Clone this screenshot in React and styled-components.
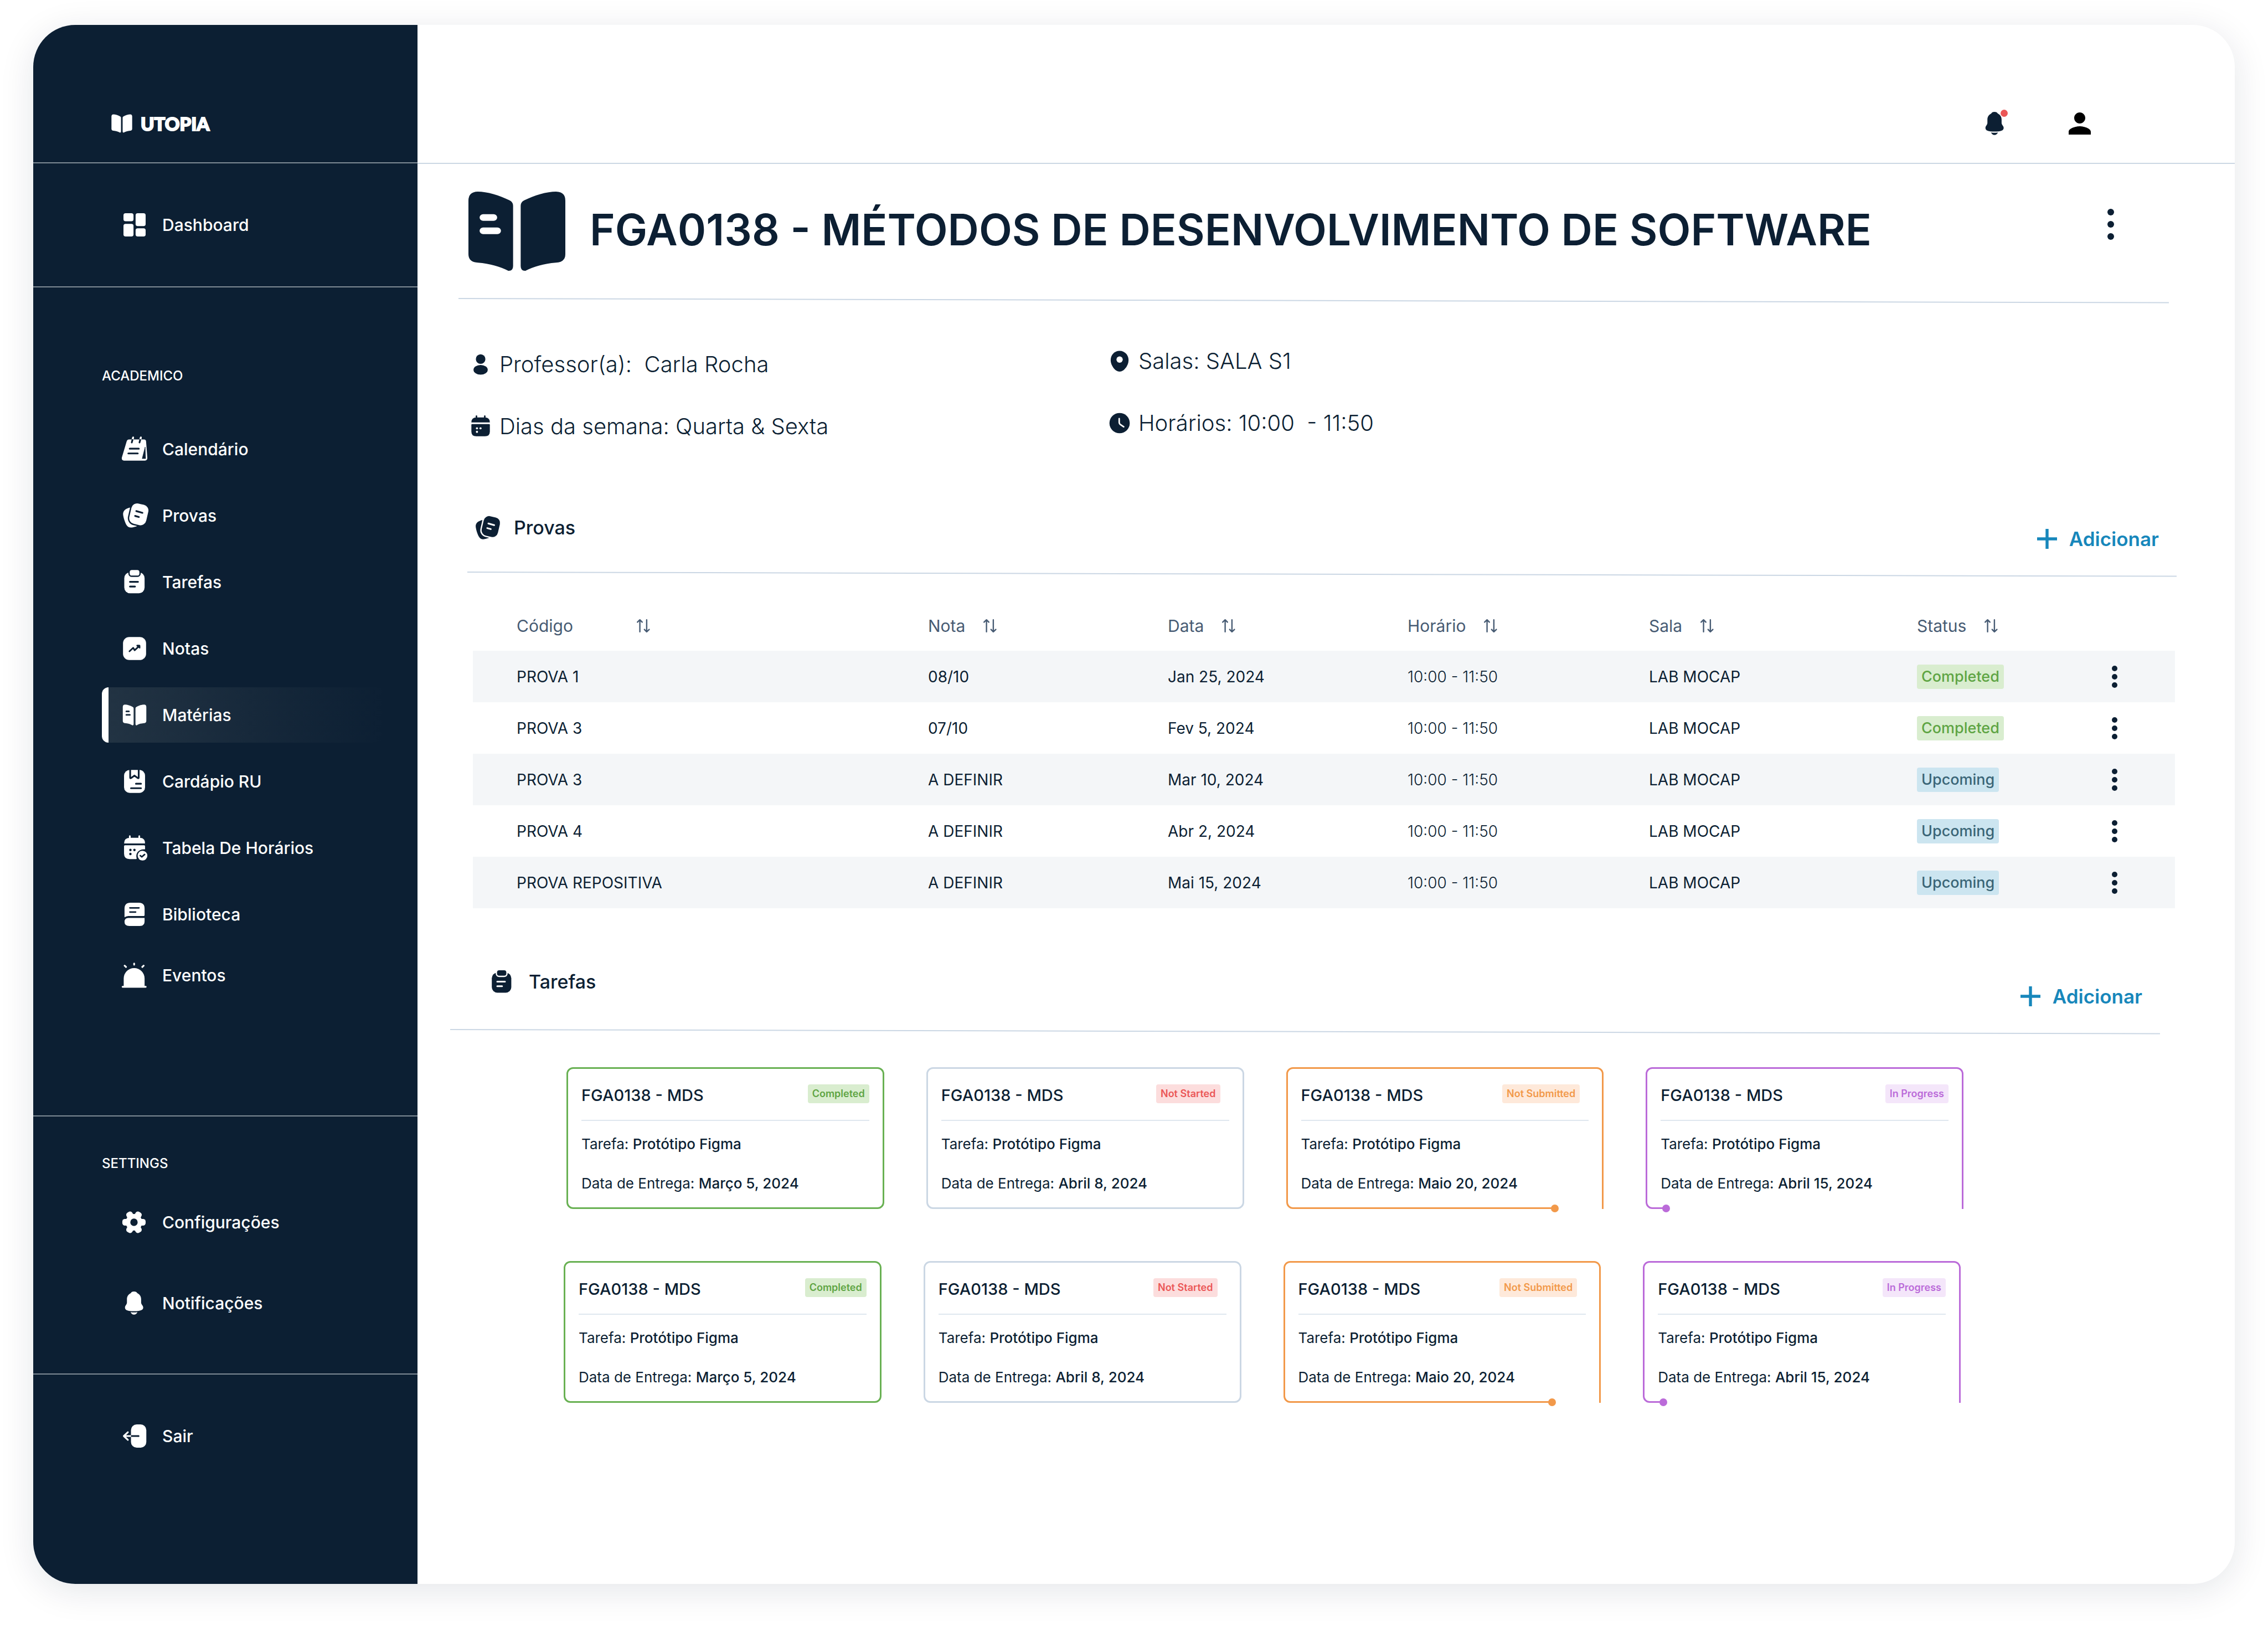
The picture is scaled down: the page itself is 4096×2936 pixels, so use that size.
import React from "react";
import styled, { createGlobalStyle, css } from "styled-components";

const navy = "#0c1f33";
const line = "#cbd7e4";

const GlobalStyle = createGlobalStyle`
  *, *::before, *::after { box-sizing: border-box; }
  body {
    margin: 0;
    background: #fff;
    color: ${navy};
    font-family: Inter, "Open Sans", sans-serif;
  }
  h1, h2, h3, p, ul, dl, dd { margin: 0; padding: 0; }
  ul { list-style: none; }
`;

/* ---------- icons ---------- */

const Svg = styled.svg`
  display: block;
  flex: none;
  width: ${(p) => p.$w || p.$size || 50}px;
  height: ${(p) => p.$h || p.$size || 50}px;
  fill: currentColor;
  overflow: visible;
`;

const Cut = ({ d, w = 1.5 }) => (
  <path d={d} fill="none" stroke="var(--cut)" strokeWidth={w} strokeLinecap="round" strokeLinejoin="round" />
);

const Icon = ({ size, w, h, box = "0 0 24 24", stretch, children }) => (
  <Svg $size={size} $w={w} $h={h} viewBox={box} preserveAspectRatio={stretch ? "none" : undefined} aria-hidden="true">
    {children}
  </Svg>
);

const DashboardIcon = (p) => (
  <Icon {...p}>
    <rect x="2.4" y="1.9" width="8.7" height="7" rx="1.8" />
    <rect x="2.4" y="11.1" width="8.7" height="11" rx="1.8" />
    <rect x="12.9" y="1.9" width="8.7" height="11.2" rx="1.8" />
    <rect x="12.9" y="15" width="8.7" height="7.1" rx="1.8" />
  </Icon>
);

const CalendarIcon = (p) => (
  <Icon {...p}>
    <path d="M7.2 3.6H20.2Q21.9 3.6 22 5.4L23.1 19.6Q23.1 21.9 21 21.9H2.8Q.5 21.7 1 19.2L5.2 5.2Q5.8 3.6 7.2 3.6Z" />
    <path d="M21.2 10.1L21.6 20.2H18.6Z" fill="var(--cut)" stroke="var(--cut)" strokeWidth=".3" />
    <path d="M10.8 1.8L10.3 3.6M17.5 1.8L17 3.6" stroke="currentColor" strokeWidth="1.5" strokeLinecap="round" />
    <path d="M10.3 3.6L9.6 6.2M17 3.6L16.3 6.2" stroke="var(--cut)" strokeWidth="1.5" strokeLinecap="round" />
    <path d="M10.8 1.8L10.35 3.4M17.5 1.8L17.05 3.4" stroke="currentColor" strokeWidth="1.5" />
    <Cut d="M7.8 11.6H15.7M6.6 15.7H14.8" />
  </Icon>
);

const ExamsIcon = (p) => (
  <Icon {...p}>
    <path d="M8.2 5C5 5.6 1.6 7.4 2.1 11.4C2.6 14.8 4 18.6 5.2 20.4C6.8 23 9.4 22.6 13.7 21.3Q14.6 20.8 13.6 20.4L12 12L8.6 5.6Q8.8 4.9 8.2 5Z" />
    <rect
      x="8.2" y="1.9" width="15" height="18" rx="5"
      transform="rotate(13 15.7 10.9)"
      stroke="var(--cut)" strokeWidth="2.4" paintOrder="stroke"
    />
    <Cut d="M13.5 8.1L18.8 9.6M12.5 12.3L15.7 13.2" />
  </Icon>
);

const TasksIcon = (p) => (
  <Icon {...p}>
    <rect x="3.1" y="3.6" width="17.6" height="18.1" rx="5" />
    <rect x="7.8" y="1.5" width="8.4" height="4.9" rx="1.9" stroke="var(--cut)" strokeWidth="2.4" paintOrder="stroke" />
    <Cut d="M8 11.8H15M8 15.9H12.4" />
  </Icon>
);

const GradesIcon = (p) => (
  <Icon {...p}>
    <rect x="2" y="2" width="20" height="20" rx="5.4" />
    <Cut d="M7.6 14.4L10.8 11.4L12.1 13.5L15.8 10.1" w={1.4} />
    <path d="M13.6 9.6Q13.5 8.8 14.3 8.8H16.2Q17 8.8 17 9.6V11.5Q16.8 12.3 16.2 11.9L13.9 10.1Z" fill="var(--cut)" />
  </Icon>
);

const BookIcon = ({ lines = true, ...p }) => (
  <Icon {...p}>
    <path d="M3.76 3.05C5.7 3.05 8.4 3.9 10.4 5Q11.2 5.4 11.2 6.2V19.9Q11.2 21 10.2 20.95C8.5 20 6.3 19.3 3.8 19.1Q1.8 19 1.8 17.2V5.1Q1.8 3.1 3.76 3.05Z" />
    <path d="M20.24 3.05C18.3 3.05 15.6 3.9 13.6 5Q12.8 5.4 12.8 6.2V19.9Q12.8 21 13.8 20.95C15.5 20 17.7 19.3 20.2 19.1Q22.2 19 22.2 17.2V5.1Q22.2 3.1 20.24 3.05Z" />
    {lines && <Cut d="M4.9 8.9H7.1M4.9 11.9H7.9" />}
  </Icon>
);

const MenuBookIcon = (p) => (
  <Icon {...p}>
    <rect x="2.9" y="2" width="18.2" height="20" rx="5" />
    <Cut d="M8.2 1.6V8.6Q8.2 9.6 9.1 9L11.9 6.9L14.7 9Q15.6 9.6 15.6 8.6V1.6" w={1.5} />
    <Cut d="M13.2 14H17.6M8.9 17.9H17.6" />
  </Icon>
);

const TimetableIcon = ({ check = true, ...p }) => (
  <Icon {...p}>
    <path d="M7.9 1.8V4M16.1 1.8V4" stroke="currentColor" strokeWidth="1.5" strokeLinecap="round" />
    <path d="M2.9 8.1Q2.9 3.2 8 3.2H16Q21.1 3.2 21.1 8.1Z" />
    {check ? (
      <>
        <path d="M2.9 10.5Q2.9 9.7 3.7 9.7H20.3Q21.1 9.7 21.1 10.5V13.2C15.6 12.8 12.6 16.6 13.8 21Q14 21.7 13.2 21.7H7.7Q2.9 21.5 2.9 17Z" />
        <circle cx="18.9" cy="18.7" r="4.2" />
        <Cut d="M17 18.7L18.3 19.8L20.7 17.7" w={1.3} />
      </>
    ) : (
      <path d="M2.9 10.5Q2.9 9.7 3.7 9.7H20.3Q21.1 9.7 21.1 10.5V17Q21.1 21.7 16.3 21.7H7.7Q2.9 21.7 2.9 17Z" />
    )}
    <g fill="var(--cut)">
      <circle cx="8.4" cy="13.8" r="1.05" />
      <circle cx="11.9" cy="13.8" r="1.05" />
      <circle cx="8.4" cy="17.3" r="1.05" />
    </g>
  </Icon>
);

const LibraryIcon = (p) => (
  <Icon {...p}>
    <path d="M3.3 14.5V7Q3.3 1.9 8.4 1.9H15.6Q20.7 1.9 20.7 7V12.7Q20.7 13.4 20 13.4H6.5Q4.8 13.5 3.3 14.5Z" />
    <path d="M6.7 15.1H20.7V18Q20.7 22.1 16.5 22.1H7.5Q3.3 22.1 3.3 18.6Q3.3 15.1 6.7 15.1Z" />
    <Cut d="M8 6.4H15.8M8 10H12.9" w={1.4} />
  </Icon>
);

const EventsIcon = (p) => (
  <Icon {...p}>
    <path d="M2.6 21.8V14.8A9.05 9.05 0 0 1 20.7 14.8V21.8Z" />
    <path
      d="M1.6 22H21.7M11.65 1.8V2.8M3.4 3.7L4.6 4.8M19.9 3.7L18.7 4.8"
      fill="none" stroke="currentColor" strokeWidth="1.5" strokeLinecap="round"
    />
  </Icon>
);

const GearIcon = (p) => (
  <Icon {...p}>
    {[0, 60, 120].map((a) => (
      <rect key={a} x="1.4" y="9.1" width="20.2" height="5.8" rx="2.3" transform={`rotate(${a} 11.5 12)`} />
    ))}
    <circle cx="11.5" cy="12" r="7.2" />
    <circle cx="11.5" cy="12" r="3.2" fill="var(--cut)" />
  </Icon>
);

const BellIcon = (p) => (
  <Icon {...p}>
    <path d="M11.5 1.9C13 1.9 13.9 2.5 14.4 3.4C16.6 4.4 17.7 6.4 17.7 8.6V11.5C17.7 13.2 19.5 14 19.5 15.8C19.5 18 17 19 11.5 19C6 19 3.7 18 3.7 15.8C3.7 14 5.4 13.2 5.4 11.5V8.6C5.4 6.4 6.5 4.4 8.7 3.4C9.2 2.5 10 1.9 11.5 1.9Z" />
    <path d="M8.6 19.8Q11.5 20.3 14.5 19.8C13.9 21.3 12.9 21.9 11.5 21.9C10.1 21.9 9.2 21.3 8.6 19.8Z" />
  </Icon>
);

const ExitIcon = (p) => (
  <Icon {...p}>
    <rect x="8.9" y="1.9" width="13.3" height="20.2" rx="5" />
    <path d="M8.9 12H3M6.2 8.7L2.7 12L6.2 15.3" fill="none" stroke="currentColor" strokeWidth="1.5" strokeLinecap="round" strokeLinejoin="round" />
    <path d="M8.9 12H15.5" stroke="var(--cut)" strokeWidth="1.5" />
    <circle cx="15.5" cy="12" r=".75" fill="var(--cut)" />
  </Icon>
);

const UserIcon = (p) => (
  <Icon {...p} box="4 4 16 16">
    <path d="M12 12c2.21 0 4-1.79 4-4s-1.79-4-4-4-4 1.79-4 4 1.79 4 4 4zm0 2c-2.67 0-8 1.34-8 4v2h16v-2c0-2.66-5.33-4-8-4z" />
  </Icon>
);

const ProfessorIcon = (p) => (
  <Icon {...p}>
    <circle cx="12" cy="6.8" r="4.7" />
    <ellipse cx="12" cy="17.3" rx="7" ry="4.8" />
  </Icon>
);

const PinIcon = (p) => (
  <Icon {...p}>
    <path d="M12 1.9C16.9 1.9 20.8 5.8 20.8 11C20.8 15 18.4 19 15.4 21.3Q12 23.5 8.6 21.3C5.6 19 3.2 15 3.2 11C3.2 5.8 7.1 1.9 12 1.9Z" />
    <circle cx="12" cy="10.5" r="3.1" fill="var(--cut)" />
  </Icon>
);

const ClockIcon = (p) => (
  <Icon {...p}>
    <circle cx="12" cy="12" r="10" />
    <Cut d="M11.6 7.6V11.2Q11.6 12.4 12.4 13.1L16 15.6" />
  </Icon>
);

const SortIcon = () => (
  <Icon size={24}>
    <path
      d="M5.6 22.8V1.4M1.2 5.4L5.6 1.2L9.8 5.4M17.9 1.2V22.6M13.8 18.6L17.9 22.8L22.4 18.6"
      fill="none" stroke="currentColor" strokeWidth="2.4" strokeLinecap="round" strokeLinejoin="round"
    />
  </Icon>
);

const PlusIcon = () => (
  <Icon size={36}>
    <path d="M12 0V24M0 12H24" stroke="currentColor" strokeWidth="3.6" />
  </Icon>
);

const DotsIcon = ({ r, step }) => (
  <Icon w={24} h={64} box="-12 -32 24 64">
    <circle cy={-step} r={r} />
    <circle r={r} />
    <circle cy={step} r={r} />
  </Icon>
);

/* ---------- frame ---------- */

const Shell = styled.div`
  --cut: #fff;
  display: grid;
  grid-template-columns: 694px minmax(0, 1fr);
  min-height: calc(100vh - 121px);
  margin: 45px 60px 76px;
  border-radius: 76px;
  overflow: hidden;
  background: #fff;
  box-shadow: 0 12px 64px rgba(12, 31, 51, 0.11);
`;

/* ---------- sidebar ---------- */

const Sidebar = styled.aside`
  --cut: ${navy};
  display: flex;
  flex-direction: column;
  background: ${navy};
  color: #fff;
`;

const SideBlock = styled.div`
  height: ${(p) => p.$height}px;
  padding: ${(p) => p.$top}px 60px 0 124px;
  border-bottom: 2px solid #7f8b95;

  &:last-child {
    height: auto;
    border-bottom: 0;
  }
`;

const Brand = styled.a`
  display: flex;
  align-items: center;
  gap: 12px;
  height: 44px;
  padding-left: 14px;
  color: inherit;
  font: 900 33px/44px Lato, sans-serif;
  text-decoration: none;
  -webkit-text-stroke: 2px currentColor;
`;

const SideTitle = styled.h2`
  font-size: 24px;
  font-weight: 500;
  line-height: 32px;
`;

const NavList = styled.ul`
  display: flex;
  flex-direction: column;
  gap: ${(p) => p.$gap || 20}px;
  margin-top: ${(p) => p.$top || 0}px;
`;

const NavLink = styled.a`
  display: flex;
  align-items: center;
  gap: 25px;
  height: ${(p) => (p.$short ? 80 : 100)}px;
  padding-left: 22px;
  border-left: 12px solid transparent;
  border-radius: 12px 0 0 12px;
  color: inherit;
  font-size: 30px;
  font-weight: 500;
  text-decoration: none;
  white-space: nowrap;

  ${(p) =>
    p.$active &&
    css`
      --cut: #203143;
      border-left-color: #fff;
      background: linear-gradient(90deg, #223343, ${navy}) padding-box;
    `}
`;

/* ---------- main ---------- */

const Main = styled.main`
  min-width: 0;
`;

const TopBar = styled.header`
  display: flex;
  justify-content: flex-end;
  align-items: center;
  gap: 108px;
  height: 251px;
  padding: 106px 260px 0 0;
  border-bottom: 2px solid ${line};
`;

const IconButton = styled.button`
  position: relative;
  display: flex;
  align-items: center;
  justify-content: center;
  padding: 0;
  border: 0;
  background: none;
  color: ${(p) => p.$color || navy};
  cursor: pointer;
`;

const Alert = styled.span`
  position: absolute;
  top: 0;
  right: 2px;
  width: 13px;
  height: 13px;
  border-radius: 50%;
  background: #eb5757;
`;

const TitleRow = styled.div`
  display: flex;
  align-items: center;
  height: 242px;
  padding: 0 212px 0 92px;
`;

const Title = styled.h1`
  flex: 1;
  margin-left: 44px;
  padding-bottom: 4px;
  font-size: 78px;
  font-weight: 600;
  line-height: 100px;
  white-space: nowrap;
`;

const TitleMenu = styled(IconButton)`
  margin-bottom: 24px;
`;

const Rule = styled.hr`
  height: 2px;
  margin: 0 ${(p) => p.$right || 0}px 0 ${(p) => p.$left || 0}px;
  border: 0;
  background: ${line};
  transform: rotate(0.14deg);
  transform-origin: left center;
`;

const Info = styled.div`
  display: grid;
  grid-template-columns: 1154px 1fr;
  padding: 82px 0 0 92px;
`;

const InfoColumn = styled.ul`
  display: flex;
  flex-direction: column;
  gap: 52px;
  padding-top: ${(p) => p.$drop || 0}px;
`;

const InfoItem = styled.li`
  display: flex;
  align-items: center;
  gap: 12px;
  font-size: 40px;
  font-weight: 300;
  line-height: 60px;
  white-space: pre;
`;

const Section = styled.section`
  margin-top: ${(p) => p.$top}px;
  padding: 0 ${(p) => p.$right}px 0 ${(p) => p.$left}px;
`;

const SectionHead = styled.div`
  display: flex;
  justify-content: space-between;
  align-items: flex-end;
  padding: 0 32px 35px ${(p) => p.$inset}px;
`;

const SectionTitle = styled.h2`
  display: flex;
  align-items: center;
  gap: 25px;
  padding-bottom: ${(p) => p.$drop}px;
  font-size: 34px;
  font-weight: 500;
  line-height: 48px;
`;

const AddButton = styled.button`
  display: flex;
  align-items: center;
  gap: 22px;
  height: 48px;
  padding: 0;
  border: 0;
  background: none;
  color: #1787bb;
  font: 600 35px/48px Inter, sans-serif;
  cursor: pointer;
`;

/* ---------- table ---------- */

const Table = styled.table`
  width: calc(100% - 13px);
  margin: 51px 3px 0 10px;
  table-layout: fixed;
  border-collapse: collapse;
  font-size: 28px;
  line-height: 40px;
  text-align: left;
`;

const Col = styled.col`
  width: ${(p) => (p.$width ? `${p.$width}px` : "auto")};
`;

const Th = styled.th`
  height: 90px;
  padding: 0;
  color: #475b73;
  font-size: 30px;
  font-weight: 400;

  &:first-child { padding-left: 79px; }
`;

const SortButton = styled.button`
  display: flex;
  align-items: center;
  gap: 33px;
  padding: 0;
  border: 0;
  background: none;
  color: inherit;
  font: inherit;
  cursor: pointer;
`;

const SortLabel = styled.span`
  min-width: ${(p) => (p.$wide ? 184 : 0)}px;
  text-align: left;
`;

const Row = styled.tr`
  &:nth-child(odd) { background: #f4f6f8; }
`;

const Td = styled.td`
  height: 93px;
  padding: 0;
  font-weight: ${(p) => (p.$light ? 300 : 400)};
  white-space: nowrap;

  &:first-child { padding-left: 79px; }
`;

const StatusCell = styled.div`
  display: flex;
  justify-content: space-between;
  align-items: center;
  padding-right: 97px;
`;

const tones = {
  completed: ["#d9edcf", "#5fa544"],
  upcoming: ["#cce5f0", "#3a6577"],
  notStarted: ["#fcdddd", "#eb5757"],
  notSubmitted: ["#fee9da", "#f2994a"],
  inProgress: ["#f4e6fa", "#bb6bd9"],
};

const Badge = styled.span`
  padding: 0 8px;
  border-radius: 4px;
  background: ${(p) => tones[p.$tone][0]};
  color: ${(p) => tones[p.$tone][1]};
  font-size: 27px;
  font-weight: 500;
  line-height: 44px;
`;

/* ---------- task cards ---------- */

const CardRow = styled.ul`
  display: grid;
  grid-template-columns: repeat(4, minmax(0, 1fr));
  gap: 76px;
  margin: ${(p) => p.$top}px ${(p) => p.$right}px 0 ${(p) => p.$left}px;
`;

const Card = styled.li`
  position: relative;
  height: 256px;
  padding: 26px 24px 0 24px;
  border: 3px solid ${(p) => p.$color};
  border-radius: 12px;

  ${(p) =>
    p.$progress &&
    css`
      border-bottom-right-radius: 0;

      &::before {
        content: "";
        position: absolute;
        right: 0;
        bottom: -3px;
        left: ${p.$progress}%;
        height: 3px;
        background: #fff;
      }

      &::after {
        content: "";
        position: absolute;
        bottom: -9px;
        left: calc(${p.$progress}% - 7px);
        width: 14px;
        height: 14px;
        border-radius: 50%;
        background: ${p.$color};
      }
    `}
`;

const CardHead = styled.div`
  display: flex;
  justify-content: space-between;
  align-items: flex-start;
  height: 68px;
  padding-right: ${(p) => p.$inset}px;
  border-bottom: 2px solid #dfe7ef;
`;

const CardTitle = styled.h3`
  font-size: 29px;
  font-weight: 500;
  line-height: 44px;
`;

const CardBadge = styled(Badge)`
  margin-top: 2px;
  font-size: 18px;
  font-weight: 600;
  line-height: 34px;
`;

const CardText = styled.p`
  margin-top: 22px;
  font-size: 26px;
  font-weight: 400;
  line-height: 40px;
  white-space: nowrap;

  & + & { margin-top: 31px; }
  strong { font-weight: 500; }
`;

/* ---------- data ---------- */

const academic = [
  ["Calendário", CalendarIcon],
  ["Provas", ExamsIcon],
  ["Tarefas", TasksIcon],
  ["Notas", GradesIcon],
  ["Matérias", BookIcon, true],
  ["Cardápio RU", MenuBookIcon],
  ["Tabela De Horários", TimetableIcon],
  ["Biblioteca", LibraryIcon],
  ["Eventos", EventsIcon],
];

const columns = ["Código", "Nota", "Data", "Horário", "Sala", "Status"];

const exams = [
  ["PROVA 1", "08/10", "Jan 25, 2024", "completed"],
  ["PROVA 3", "07/10", "Fev 5, 2024", "completed"],
  ["PROVA 3", "A DEFINIR", "Mar 10, 2024", "upcoming"],
  ["PROVA 4", "A DEFINIR", "Abr 2, 2024", "upcoming"],
  ["PROVA REPOSITIVA", "A DEFINIR", "Mai 15, 2024", "upcoming"],
];

const tasks = [
  { status: "Completed", tone: "completed", color: "#69b153", due: "Março 5, 2024" },
  { status: "Not Started", tone: "notStarted", color: line, due: "Abril 8, 2024", inset: 16 },
  { status: "Not Submitted", tone: "notSubmitted", color: "#f2994a", due: "Maio 20, 2024", inset: 16, progress: 85 },
  { status: "In Progress", tone: "inProgress", color: "#bb6bd9", due: "Abril 15, 2024", progress: 6 },
];

const NavItem = ({ label, icon: Glyph, active, short }) => (
  <li>
    <NavLink href="#" $active={active} $short={short} aria-current={active ? "page" : undefined}>
      <Glyph />
      {label}
    </NavLink>
  </li>
);

const TaskCards = ({ top, left, right }) => (
  <CardRow $top={top} $left={left} $right={right}>
    {tasks.map((t) => (
      <Card key={t.status} $color={t.color} $progress={t.progress}>
        <CardHead $inset={t.inset || 0}>
          <CardTitle>FGA0138 - MDS</CardTitle>
          <CardBadge $tone={t.tone}>{t.status}</CardBadge>
        </CardHead>
        <CardText>Tarefa: <strong>Protótipo Figma</strong></CardText>
        <CardText>Data de Entrega: <strong>{t.due}</strong></CardText>
      </Card>
    ))}
  </CardRow>
);

export default function App() {
  return (
    <>
      <GlobalStyle />
      <Shell>
        <Sidebar>
          <SideBlock $height={250} $top={156}>
            <Brand href="#">
              <BookIcon w={44} h={44} lines={false} />
              UTOPIA
            </Brand>
          </SideBlock>
          <SideBlock $height={224} $top={61}>
            <NavList>
              <NavItem label="Dashboard" icon={DashboardIcon} />
            </NavList>
          </SideBlock>
          <SideBlock $height={1497} $top={144}>
            <SideTitle>ACADEMICO</SideTitle>
            <NavList $top={66}>
              {academic.map(([label, icon, active], i) => (
                <NavItem key={label} label={label} icon={icon} active={active} short={i === 8} />
              ))}
            </NavList>
          </SideBlock>
          <SideBlock $height={466} $top={69}>
            <SideTitle>SETTINGS</SideTitle>
            <NavList $top={40} $gap={46}>
              <NavItem label="Configurações" icon={GearIcon} />
              <NavItem label="Notificações" icon={BellIcon} />
            </NavList>
          </SideBlock>
          <SideBlock $top={61}>
            <NavList>
              <NavItem label="Sair" icon={ExitIcon} />
            </NavList>
          </SideBlock>
        </Sidebar>

        <Main>
          <TopBar>
            <IconButton aria-label="Notificações">
              <BellIcon size={50} />
              <Alert />
            </IconButton>
            <IconButton $color="#000" aria-label="Perfil">
              <UserIcon size={40} />
            </IconButton>
          </TopBar>

          <TitleRow>
            <BookIcon w={175} h={143} box="1.8 3.05 20.4 17.9" stretch />
            <Title>FGA0138 - MÉTODOS DE DESENVOLVIMENTO DE SOFTWARE</Title>
            <TitleMenu aria-label="Opções">
              <DotsIcon r={6} step={22} />
            </TitleMenu>
          </TitleRow>
          <Rule $left={74} $right={119} />

          <Info>
            <InfoColumn $drop={6}>
              <InfoItem><ProfessorIcon size={44} />{"Professor(a):  Carla Rocha"}</InfoItem>
              <InfoItem><TimetableIcon size={44} check={false} />{"Dias da semana: Quarta & Sexta"}</InfoItem>
            </InfoColumn>
            <InfoColumn>
              <InfoItem><PinIcon size={44} />{"Salas: SALA S1"}</InfoItem>
              <InfoItem><ClockIcon size={44} />{"Horários: 10:00  - 11:50"}</InfoItem>
            </InfoColumn>
          </Info>

          <Section $top={129} $left={90} $right={105}>
            <SectionHead $inset={11}>
              <SectionTitle $drop={20}><ExamsIcon size={48} />Provas</SectionTitle>
              <AddButton><PlusIcon />Adicionar</AddButton>
            </SectionHead>
            <Rule />
            <Table>
              <colgroup>
                <Col $width={822} />
                <Col $width={433} />
                <Col $width={433} />
                <Col $width={436} />
                <Col $width={484} />
                <Col />
              </colgroup>
              <thead>
                <tr>
                  {columns.map((c, i) => (
                    <Th key={c} scope="col">
                      <SortButton>
                        <SortLabel $wide={i === 0}>{c}</SortLabel>
                        <SortIcon />
                      </SortButton>
                    </Th>
                  ))}
                </tr>
              </thead>
              <tbody>
                {exams.map(([code, grade, date, tone]) => (
                  <Row key={code + date}>
                    <Td>{code}</Td>
                    <Td>{grade}</Td>
                    <Td>{date}</Td>
                    <Td $light>10:00 - 11:50</Td>
                    <Td>LAB MOCAP</Td>
                    <Td>
                      <StatusCell>
                        <Badge $tone={tone}>{tone === "completed" ? "Completed" : "Upcoming"}</Badge>
                        <IconButton aria-label="Opções da prova">
                          <DotsIcon r={5} step={15} />
                        </IconButton>
                      </StatusCell>
                    </Td>
                  </Row>
                ))}
              </tbody>
            </Table>
          </Section>

          <Section $top={109} $left={59} $right={135}>
            <SectionHead $inset={69}>
              <SectionTitle $drop={26}><TasksIcon size={48} />Tarefas</SectionTitle>
              <AddButton><PlusIcon />Adicionar</AddButton>
            </SectionHead>
            <Rule />
            <TaskCards top={67} left={210} right={355} />
            <TaskCards top={94} left={205} right={360} />
          </Section>
        </Main>
      </Shell>
    </>
  );
}
